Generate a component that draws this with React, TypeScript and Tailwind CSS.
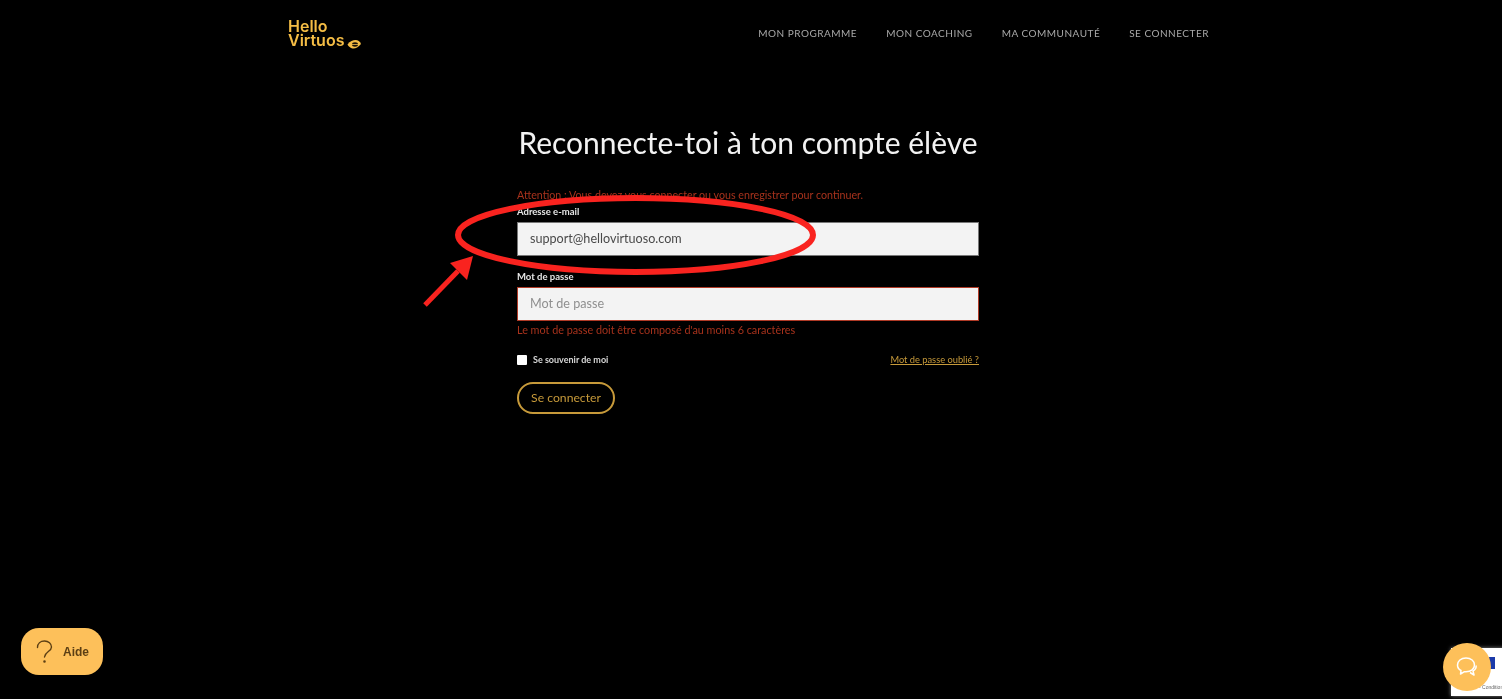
const navLinks = ['MON PROGRAMME', 'MON COACHING', 'MA COMMUNAUTÉ', 'SE CONNECTER'];

const App = () => {
  return (
    <div className="relative h-[699px] overflow-hidden bg-black font-['Lato',sans-serif] blur-[0.4px]">
      {/* header */}
      <header className="flex justify-between pl-[288px] pr-[293px]">
        <div className="pt-[19px] relative w-[80px] font-['Inter',sans-serif] text-[16px] leading-[14px] font-semibold text-[#f5bd45]">
          <div>Hello</div>
          <div>Virtuos</div>
          <svg className="absolute left-[59px] top-[39px]" width="15" height="11" viewBox="0 0 15 11">
            <path d="M0.5 5.5 C3 2 6 1 8.5 1 C11 1 13 2.5 14 5 C11 8.5 8 10 5.5 9.5 C3.5 9 1.5 7.5 0.5 5.5Z" fill="#f5bd45" />
            <ellipse cx="8" cy="5.5" rx="3" ry="2.2" fill="#1a1206" />
            <path d="M2 5.5 H13" stroke="#f5bd45" strokeWidth="0.8" />
          </svg>
        </div>
        <nav className="flex gap-[29px] pt-[26px] text-[10px] leading-[15px] tracking-[0.5px] text-[#a8a8a8]">
          {navLinks.map((link) => (
            <a key={link}>{link}</a>
          ))}
        </nav>
      </header>

      {/* login form */}
      <main className="mx-auto mt-[74px] w-[462px] translate-x-[-3px]">
        <h1 className="text-center text-[30px] leading-[42px] text-[#f2f2f2] whitespace-nowrap">
          Reconnecte-toi à ton compte élève
        </h1>
        <p className="mt-[24px] text-[10.7px] leading-[16px] text-[#a8321c]">
          Attention : Vous devez vous connecter ou vous enregistrer pour continuer.
        </p>
        <label className="mt-[2px] block text-[9.5px] leading-[14px] font-bold text-[#e6e6e6]">Adresse e-mail</label>
        <div className="mt-[3px] flex h-[34px] items-center border border-[#777] bg-[#f3f3f3] pl-[12px] text-[12.6px] text-[#4a4a4a]">
          support@hellovirtuoso.com
        </div>
        <label className="mt-[14px] block text-[9.5px] leading-[14px] font-bold text-[#e6e6e6]">Mot de passe</label>
        <div className="mt-[3px] flex h-[34px] items-center border border-[#b03a26] bg-[#f3f3f3] pl-[12px] text-[12.6px] text-[#8f8f8f]">
          Mot de passe
        </div>
        <p className="mt-[1px] text-[10.8px] leading-[16px] text-[#a8321c]">
          Le mot de passe doit être composé d'au moins 6 caractères
        </p>
        <div className="mt-[15px] flex items-center justify-between">
          <div className="flex items-center gap-[6px]">
            <span className="h-[10px] w-[10px] rounded-[1px] bg-white" />
            <span className="text-[9px] leading-[14px] font-bold text-[#d8d8d8]">Se souvenir de moi</span>
          </div>
          <a className="text-[9.3px] leading-[14px] text-[#c79a3a] underline">Mot de passe oublié ?</a>
        </div>
        <button className="mt-[15px] h-[32px] w-[98px] rounded-full border-2 border-[#c79a3a] text-[12.2px] text-[#c79a3a]">
          Se connecter
        </button>
      </main>

      {/* red annotation */}
      <svg className="absolute left-[415px] top-[185px]" width="410" height="130" viewBox="0 0 410 130">
        <ellipse cx="220.5" cy="50" rx="177.5" ry="37" fill="none" stroke="#f9231f" strokeWidth="6" />
        <path d="M10 120 L43 86" stroke="#f9231f" strokeWidth="5" />
        <path d="M58 71 L35 78 L52 95 Z" fill="#f9231f" />
      </svg>

      {/* help button */}
      <button className="absolute left-[21px] top-[628px] flex h-[47px] w-[82px] items-center gap-[10px] rounded-[18px] bg-[#fdc05a] pl-[15px] font-['Liberation_Sans',sans-serif] text-[12px] font-bold text-[#5c3f14]">
        <svg width="17" height="24" viewBox="0 0 17 24" fill="none" stroke="#5c3f14" strokeWidth="1.4" strokeLinecap="round">
          <path d="M1.5 7.5 C1.5 3.5 4.5 1 8.5 1 C12.5 1 15.5 3.5 15.5 7 C15.5 11.5 9 11.5 8.5 17" />
          <circle cx="8.5" cy="21.5" r="0.6" />
        </svg>
        Aide
      </button>

      {/* recaptcha + chat */}
      <div className="absolute left-[1451px] top-[648px] h-[48px] w-[60px] bg-white shadow-[0_0_4px_#888]">
        <div className="absolute left-[38px] top-[9px] h-[12px] w-[6px] bg-[#1c3aa9]" />
        <span className="absolute left-[28px] top-[37px] font-['Liberation_Sans',sans-serif] text-[5px] leading-[5px] whitespace-nowrap text-[#666]">- Conditions</span>
      </div>
      <button className="absolute left-[1443px] top-[643px] flex h-[48px] w-[48px] items-center justify-center rounded-full bg-[#fdc05a]">
        <svg width="22" height="22" viewBox="0 0 22 22" fill="none" stroke="#fff" strokeWidth="1.5" strokeLinejoin="round">
          <path d="M14 16.5 L18 19 L17 15 C19.5 13.5 20.5 11.5 20 9.5" />
          <path d="M10 2 C5 2 1.5 5 1.5 9 C1.5 11.5 3 13.5 5 14.5 L4.5 18 L8.5 15.7 C9 15.8 9.5 15.8 10 15.8 C15 15.8 18.5 13 18.5 9 C18.5 5 15 2 10 2Z" />
        </svg>
      </button>
    </div>
  );
};

export default App;
